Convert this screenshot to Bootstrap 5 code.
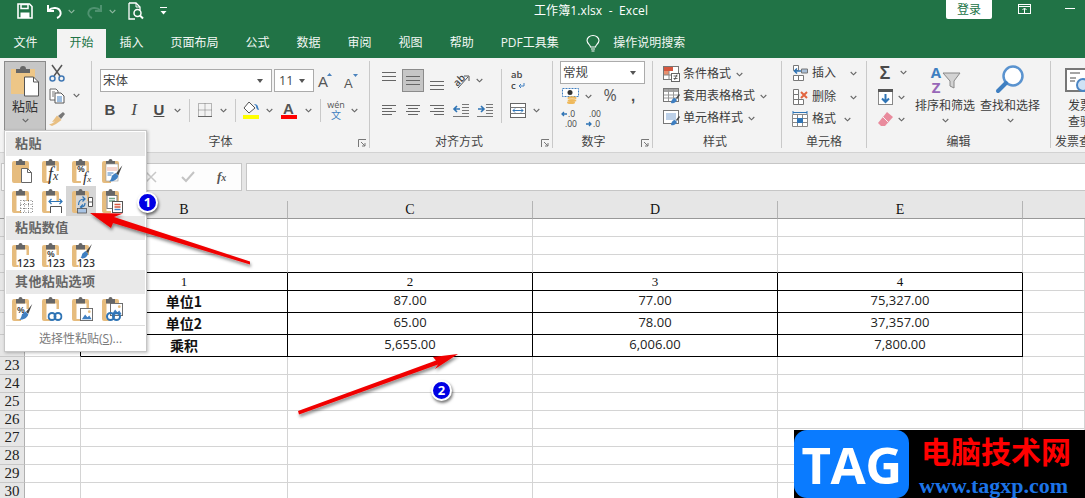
<!DOCTYPE html>
<html lang="zh-CN">
<head>
<meta charset="utf-8">
<title>工作簿1.xlsx - Excel</title>
<link href="https://cdn.jsdelivr.net/npm/bootstrap@5.3.0/dist/css/bootstrap.min.css" rel="stylesheet">
<style>
html,body{width:1085px;height:498px;overflow:hidden;margin:0}
body{position:relative;font-family:"Open Sans","Noto Sans CJK SC",sans-serif;font-size:12px;line-height:1.2;color:#3c3c3c;background:#fff}
svg{overflow:visible;flex:none}
.titlebar{height:29px;background:#217346;color:#fff}
.qt{height:22px;justify-content:center}
.ttl{width:200px;font-size:12px;letter-spacing:.1px;padding-top:4px;height:22px;white-space:pre}
.login{width:46px;height:19px;padding:0;background:#fff;color:#217346;border:0;border-radius:0 0 2px 2px;font-size:12px;line-height:19px}
.tabbar{height:29px;background:#217346;color:#f2f7f4}
.tabx{padding:0 13.5px;height:29px;line-height:27px;color:#f2f7f4;text-decoration:none;white-space:nowrap}
.tabx.on{background:#f3f3f3;color:#217346;padding:0 12.5px;margin-left:6px}
.ribbon{height:95px;background:#f3f3f3;border-bottom:1px solid #d2d2d2;padding-top:3px;overflow:hidden}
.grp{position:relative;flex:none;height:87px;border-right:1px solid #c9c9c9;display:flex;flex-direction:column}
.gbody{height:74px;flex:none}
.glabel{height:13px;line-height:13px;text-align:center;font-size:12px;color:#444;white-space:nowrap}
.lb2{padding-right:20px}.lb3{padding-right:4px}.lb4{padding-right:18px}.lb5{padding-right:4px}
.launch{position:absolute;right:3px;bottom:1px}
.g1{width:92px}.g2{width:278px}.g3{width:183px}.g4{width:100px}.g5{width:129px}.g6{width:85px}.g7{width:184px}.g8{width:60px;border-right:0}
.pastebtn{width:42px;height:70px;margin-left:4px;background:#c6c6c6;border:1px solid #8b8b8b;padding:0;color:#333}
.smallcol{width:40px}
.sr{height:23px}
.combo{height:23px;background:#fff;border:1px solid #ababab;font-size:12.5px;padding:0 8px 0 2px;color:#444}
.cb1{width:172px}.cb2{width:40px;margin-left:2px}.cb3{width:85px}
.tri{width:0;height:0;border-left:3.5px solid transparent;border-right:3.5px solid transparent;border-top:4px solid #555}
.c{display:flex;align-items:center;justify-content:center;flex:none}
.w12{width:12px}.w14{width:14px}.w16{width:16px}.w18{width:18px}.w20{width:20px}.w22{width:22px}.w24{width:24px}.w25{width:25px}.w26{width:26px}.w28{width:28px}.w10{width:10px}
.vs{width:1px;background:#c9c9c9;flex:none}
.h23{height:23px}.h24{height:24px}
.pt8{padding-top:8px}.ps8{padding-left:8px}.ps10{padding-left:10px}.mt6{margin-top:6px}
.press{background:#c6c6c6;border:1px solid #8b8b8b}
.bl{font-weight:700;font-size:15px;color:#4a4a4a;font-family:"Liberation Sans",sans-serif}
.it{font-style:italic;font-weight:400;font-family:"Liberation Serif",serif;font-size:17px}
.ul{text-decoration:underline}
.sty{height:22px}
.bigcol{width:60px}
.bigic{height:34px}
.ftxt{white-space:nowrap}
.strip{height:10px;background:#e6e6e6}
.fbar{height:28px;background:#e6e6e6}
.fleft{width:241px;margin-left:1px;background:#fdfdfd;border:1px solid #c6c6c6;height:28px;justify-content:flex-end}
.fright{flex:1;margin-left:4px;background:#fff;border:1px solid #c6c6c6;border-right:0;height:28px}
.sheet{table-layout:fixed;width:1085px;border-collapse:separate;border-spacing:0}
.sheet th{background:#e6e6e6;font:400 14px "Liberation Serif",serif;color:#111;text-align:center;padding:0;height:18px}
.sheet thead th{border-bottom:1px solid #989898;border-right:1px solid #b4b4b4;vertical-align:middle}
.sheet tbody th{font-size:15px;border-right:1px solid #b0b0b0;border-bottom:1px solid #c8c8c8;color:#222}
.sheet td{border-right:1px solid #d4d4d4;border-bottom:1px solid #d4d4d4;padding:0;height:18px;text-align:center;color:#222;font-size:13px;white-space:nowrap;vertical-align:middle;line-height:1}
.sheet tr.tall td,.sheet tr.tall th{height:22px}
.sheet tr.tall td{padding-bottom:2px}
.sheet td.kb{border-bottom-color:#000}
.sheet td.kr{border-right-color:#000}
.sheet td.k{border-right-color:#000;border-bottom-color:#000}
.sheet td.ser{font:400 13px "Liberation Serif",serif;color:#111}
.sheet td.bd{font:700 14px/16px "Noto Sans CJK SC",sans-serif;color:#111}
.pmenu{display:block;left:4px;top:130px;width:143px;height:222px;min-width:0;padding:1px 1px 0;margin:0;background:#fff;border:1px solid #c6c6c6;border-radius:0;box-shadow:1px 1px 3px rgba(0,0,0,.25)}
.phead{height:24px;line-height:23px;background:#e9e9e9;color:#666;font-weight:700;font-size:13px;padding:0 0 0 9px;letter-spacing:.4px}
.picrow{height:30px}
.pcell{width:30px;height:30px;padding-left:6px;display:flex;align-items:center;flex:none}
.pcell.hov{background:#d6d6d6}
.psep{height:1px;background:#dcdcdc;margin:1px 0 0}
.pspecial{height:26px;line-height:26px;text-align:center;color:#7a7a7a;font-size:12px;padding:0 0 0 10px;background:none}
.overlay{position:absolute;left:0;top:0;pointer-events:none;z-index:1010}
.numdot{position:absolute;z-index:1011;width:21px;height:21px;border-radius:50%;background:#0000e4;border:2px solid #fff;color:#fff;font:700 13px/17px "Open Sans",sans-serif;text-align:center;box-shadow:1px 2px 3px rgba(0,0,0,.55)}
.n1{left:137px;top:192px}.n2{left:431px;top:380px}
.wmark{position:absolute;left:794px;top:430px;width:291px;height:68px;background:#000;overflow:hidden}
.wblue{width:115px;height:68px;background:#0a7bff;border-radius:13px;color:#fff;font:700 51px/68px "Open Sans",sans-serif;text-align:center;letter-spacing:-.5px;flex:none}
.wcn{color:#f00;font:700 30px/30px "Noto Sans CJK SC",sans-serif;margin:5px 0 0 12px;white-space:nowrap}
.wen{color:#1c74e8;font:700 22px/22px "Liberation Serif",serif;margin:10px 0 0 10px;white-space:nowrap}
</style>
</head>
<body>
<svg width="0" height="0" class="position-absolute">
<symbol id="chv" viewBox="0 0 7 5"><path d="M.7 1 3.500 3.800 6.300 1" fill="none" stroke="#666" stroke-width="1.100"/></symbol>
<symbol id="chw" viewBox="0 0 7 5"><path d="M.7 1 3.500 3.800 6.300 1" fill="none" stroke="#8fb8a1" stroke-width="1.100"/></symbol>
<symbol id="pb" viewBox="0 0 21 24"><path fill="#e6bc7e" d="M0 4a2 2 0 0 1 2-2h13a2 2 0 0 1 2 2v8h-2.500V6.500h-10V22H9v2H2a2 2 0 0 1-2-2z"/><path fill="#666" d="M4 2h2.500a2 2 0 0 1 4 0H13v4.500H4z"/></symbol>
<symbol id="lnk" viewBox="0 0 15 9"><rect x="1" y="1" width="7" height="7" rx="3.500" fill="none" stroke="#2f74b5" stroke-width="2"/><rect x="7" y="1" width="7" height="7" rx="3.500" fill="none" stroke="#2f74b5" stroke-width="2"/></symbol>
<symbol id="bru" viewBox="0 0 12 14"><path d="M11.500 0 6 7l2 1.500z" fill="#444"/><path d="M5.500 6.500 8 9c-.5 3-4 5-8 5 2-1.500 2-3.500 2.500-5z" fill="#3f7fc1"/></symbol>
<symbol id="pict" viewBox="0 0 14 14"><rect x=".5" y=".5" width="13" height="13" fill="#fff" stroke="#666"/><path d="M2 12 5.500 7 8 10l2-2 2.500 4z" fill="#3f7fc1"/><circle cx="10" cy="4" r="1.500" fill="#e6bc7e"/></symbol>
</svg>

<div class="titlebar d-flex align-items-start">
  <div class="d-flex qt align-items-center" style="margin-left:17px">
    <svg width="16" height="16" viewBox="0 0 16 16"><path d="M1 1h11.500L15 3.500V15H1z" fill="none" stroke="#fff" stroke-width="1.600"/><path d="M4 1.500h7v4H4z" fill="none" stroke="#fff" stroke-width="1.500"/><path d="M3.500 9.500h9V15h-9z" fill="#fff"/></svg>
  </div>
  <div class="d-flex qt align-items-center" style="margin-left:13px">
    <svg width="17" height="15" viewBox="0 0 17 15"><path d="M2 1v6h6" fill="none" stroke="#fff" stroke-width="2"/><path d="M2.500 6.500C6 3 13 3 14.500 8c.7 2.500-1 5-3.500 6" fill="none" stroke="#fff" stroke-width="2"/></svg>
  </div>
  <div class="d-flex qt align-items-center" style="margin-left:5px"><svg width="7" height="5"><use href="#chw"/></svg></div>
  <div class="d-flex qt align-items-center" style="margin-left:11px">
    <svg width="17" height="15" viewBox="0 0 17 15"><g fill="none" stroke="#4f9270" stroke-width="2"><path d="M15 1v6H9"/><path d="M14.500 6.500C11 3 4 3 2.500 8c-.7 2.500 1 5 3.500 6"/></g></svg>
  </div>
  <div class="d-flex qt align-items-center" style="margin-left:6px"><svg width="7" height="5"><use href="#chw"/></svg></div>
  <div class="d-flex qt align-items-center" style="margin-left:12px">
    <svg width="16" height="18" viewBox="0 0 16 18"><path d="M1 1h7l4 4v3M1 1v16h6" fill="none" stroke="#fff" stroke-width="1.300"/><path d="M8 1v4h4" fill="none" stroke="#fff"/><circle cx="9.500" cy="11" r="3.500" fill="none" stroke="#fff" stroke-width="1.500"/><path d="m12 13.500 3 3" stroke="#fff" stroke-width="2"/></svg>
  </div>
  <div class="d-flex qt align-items-center" style="margin-left:16px">
    <svg width="7" height="8" viewBox="0 0 7 8"><path d="M0 .5h7" stroke="#fff"/><path d="M.5 4h6L3.500 7.500z" fill="#fff"/></svg>
  </div>
  <div class="ttl" style="margin-left:367px">工作簿1.xlsx  -  Excel</div>
  <button type="button" class="btn login ms-auto">登录</button>
  <div class="d-flex qt align-items-center" style="margin-left:26px;height:18px">
    <svg width="13" height="10" viewBox="0 0 13 10"><rect x=".5" y=".5" width="12" height="9" fill="none" stroke="#fff"/><path d="M0 2.500h13" stroke="#fff"/><path d="M6.500 9V4.500M4.500 6l2-2 2 2" fill="none" stroke="#fff"/></svg>
  </div>
  <div class="d-flex qt align-items-center" style="margin-left:34px;margin-right:10px;height:17px">
    <svg width="10" height="1"><path d="M0 .5h10" stroke="#fff"/></svg>
  </div>
</div>

<nav class="tabbar d-flex align-items-start">
  <a class="tabx" href="#">文件</a>
  <a class="tabx on" href="#">开始</a>
  <a class="tabx" href="#">插入</a>
  <a class="tabx" href="#">页面布局</a>
  <a class="tabx" href="#">公式</a>
  <a class="tabx" href="#">数据</a>
  <a class="tabx" href="#">审阅</a>
  <a class="tabx" href="#">视图</a>
  <a class="tabx" href="#">帮助</a>
  <a class="tabx" href="#">PDF工具集</a>
  <div class="d-flex align-items-center" style="height:29px;margin-left:14px">
    <svg width="14" height="18" viewBox="0 0 14 18"><path d="M4.500 12c0-2-3.500-3.500-3.500-6.500a6 5 0 0 1 12 0c0 3-3.500 4.500-3.500 6.500z" fill="none" stroke="#fff" stroke-width="1.100"/><path d="M5 14h4M5.500 16h3" stroke="#fff" stroke-width="1.200"/></svg>
  </div>
  <a class="tabx" href="#" style="padding-left:13px">操作说明搜索</a>
</nav>

<div class="ribbon d-flex">
  <!-- clipboard -->
  <div class="grp g1">
    <div class="gbody d-flex">
      <button type="button" class="btn pastebtn rounded-0 d-flex flex-column align-items-center">
        <svg width="30" height="32" viewBox="0 0 30 32" style="margin-top:3px"><rect x="1" y="4" width="24" height="25" fill="#edc687"/><path d="M6 4h4a3 3 0 0 1 6 0h4v4H6z" fill="#666"/><path d="M14.500 12h9l5 5v14h-14z" fill="#fff" stroke="#555"/><path d="M23.500 12v5h5" fill="none" stroke="#555"/></svg>
        <span style="font-size:13px;margin-top:1px;line-height:16px">粘贴</span>
        <svg width="7" height="5" class="mt-1"><use href="#chv"/></svg>
      </button>
      <div class="smallcol">
        <div class="sr d-flex align-items-center" style="padding-left:3px">
          <svg width="16" height="18" viewBox="0 0 16 18"><path d="M3 1l8 11M13 1 5 12" stroke="#555" stroke-width="1.500"/><circle cx="3.500" cy="14.500" r="2.500" fill="none" stroke="#4178b4" stroke-width="1.500"/><circle cx="12.500" cy="14.500" r="2.500" fill="none" stroke="#4178b4" stroke-width="1.500"/></svg>
        </div>
        <div class="sr d-flex align-items-center" style="padding-left:3px">
          <svg width="16" height="16" viewBox="0 0 16 16"><path d="M1 1h6l2 2v9H1z" fill="#fff" stroke="#666"/><path d="M6 5h6l3 3v7H6z" fill="#fff" stroke="#555"/><path d="M8 9h5M8 11h5M8 13h5" stroke="#3f7fc1"/><path d="M3 4h3M3 6h2M3 8h2" stroke="#777"/></svg>
          <svg width="7" height="5" style="margin-left:8px"><use href="#chv"/></svg>
        </div>
        <div class="sr d-flex align-items-center" style="padding-left:3px">
          <svg width="16" height="14" viewBox="0 0 16 14"><path d="M9 4 14 0l2 2-4 5z" fill="#777"/><path d="M8 3.500 12.500 8 7 12 3 14l-3-1.500 3-1 3-2-3 .5z" fill="#e8bf82"/></svg>
        </div>
      </div>
    </div>
  </div>
  <!-- font -->
  <div class="grp g2">
    <div class="gbody ps8 pt8">
      <div class="d-flex align-items-center h23">
        <div class="combo cb1 d-flex align-items-center justify-content-between"><span>宋体</span><span class="tri"></span></div>
        <div class="combo cb2 d-flex align-items-center justify-content-between"><span style="padding-left:2px">11</span><span class="tri"></span></div>
        <div class="c w26"><svg width="18" height="15" viewBox="0 0 18 15"><text x="0" y="14" font-family="Liberation Sans" font-size="15" fill="#555">A</text><path d="M9 3 11.500 0 14 3z" fill="#4a82bd"/></svg></div>
        <div class="c w24"><svg width="16" height="14" viewBox="0 0 16 14"><text x="0" y="14" font-family="Liberation Sans" font-size="13" fill="#555">A</text><path d="M9 0 11.500 3 14 0z" fill="#4a82bd"/></svg></div>
      </div>
      <div class="d-flex align-items-center h24 mt6">
        <div class="c w20 bl">B</div>
        <div class="c w28 bl it">I</div>
        <div class="c w22 bl ul">U</div>
        <div class="c w14"><svg width="7" height="5"><use href="#chv"/></svg></div>
        <div class="c w10"><span class="vs h23"></span></div>
        <div class="c w22"><svg width="14" height="14" viewBox="0 0 14 14"><path d="M.5.500h13v13H.5zM7 .5v13M.5 7h13" fill="none" stroke="#777" stroke-dasharray="1 1"/><path d="M0 13.500h14" stroke="#666"/></svg></div>
        <div class="c w14"><svg width="7" height="5"><use href="#chv"/></svg></div>
        <div class="c w10"><span class="vs h23"></span></div>
        <div class="c w22"><svg width="17" height="18" viewBox="0 0 17 18"><path d="M6 1 1 7l5 5 6-5z" fill="#fff" stroke="#555"/><path d="M11 3c2 0 4 1 4 3l1 3c-2 0-3-2-3-4z" fill="#3f7fc1"/><rect y="14" width="16" height="4" fill="#ff0"/></svg></div>
        <div class="c w14"><svg width="7" height="5"><use href="#chv"/></svg></div>
        <div class="c w25"><svg width="16" height="18" viewBox="0 0 16 18"><text x="2" y="13" font-family="Liberation Sans" font-weight="700" font-size="15" fill="#555">A</text><rect y="14" width="16" height="4" fill="#f00"/></svg></div>
        <div class="c w14"><svg width="7" height="5"><use href="#chv"/></svg></div>
        <div class="c w10"><span class="vs h23"></span></div>
        <div class="c w22"><svg width="18" height="20" viewBox="0 0 18 20"><text x="9" y="8" text-anchor="middle" font-family="Open Sans" font-size="9" fill="#555">wén</text><text x="9" y="19" text-anchor="middle" font-family="Noto Sans CJK SC" font-size="10" fill="#3f7fc1">文</text></svg></div>
        <div class="c w14"><svg width="7" height="5"><use href="#chv"/></svg></div>
      </div>
    </div>
    <div class="glabel lb2">字体</div>
    <svg class="launch" width="8" height="8" viewBox="0 0 8 8"><path d="M.5 8V.5H8M3 3l4 4M4 7h3V4" fill="none" stroke="#777"/></svg>
  </div>
  <!-- align -->
  <div class="grp g3">
    <div class="gbody pt8 ps8 d-flex">
      <div style="width:118px">
        <div class="d-flex align-items-center h23" style="gap:2px">
          <div class="c w22 h23"><svg width="14" height="23"><path d="M0 3.500h14M0 7.500h14M0 11.500h14" stroke="#666"/></svg></div>
          <div class="c w22 h23 press"><svg width="14" height="21"><path d="M0 6.500h14M0 10.500h14M0 14.500h14" stroke="#666"/></svg></div>
          <div class="c w22 h23"><svg width="14" height="23"><path d="M0 12.500h14M0 16.500h14M0 20.500h14" stroke="#666"/></svg></div>
          <div class="c w22 h23"><svg width="17" height="17" viewBox="0 0 17 17"><text x="1" y="13" transform="rotate(-45 5 10)" font-family="Open Sans" font-size="10" font-weight="600" fill="#444">ab</text><path d="M5 16 15 5" stroke="#555"/><path d="M11 4h5v5" fill="none" stroke="#555"/></svg></div>
          <div class="c w12" style="margin-left:-1px"><svg width="7" height="5"><use href="#chv"/></svg></div>
        </div>
        <div class="d-flex align-items-center h24 mt6" style="gap:2px">
          <div class="c w22"><svg width="14" height="11"><path d="M0 .5h14M0 3.500h10M0 6.500h14M0 9.500h10" stroke="#666"/></svg></div>
          <div class="c w22"><svg width="14" height="11"><path d="M0 .5h14M2 3.500h10M0 6.500h14M2 9.500h10" stroke="#666"/></svg></div>
          <div class="c w22"><svg width="14" height="11"><path d="M0 .5h14M4 3.500h10M0 6.500h14M4 9.500h10" stroke="#666"/></svg></div>
          <div class="c w22"><svg width="16" height="13" viewBox="0 0 16 13"><path d="M9 .5h7M9 3.500h7M9 6.500h7M9 9.500h7M0 12.500h16" stroke="#777"/><path d="M7 5H2M4 2 1 5l3 3" fill="none" stroke="#2f74b5" stroke-width="1.600"/></svg></div>
          <div class="c w22"><svg width="16" height="13" viewBox="0 0 16 13"><path d="M9 .5h7M9 3.500h7M9 6.500h7M9 9.500h7M0 12.500h16" stroke="#777"/><path d="M1 5h5M4 2l3 3-3 3" fill="none" stroke="#2f74b5" stroke-width="1.600"/></svg></div>
        </div>
      </div>
      <div class="vs" style="height:54px;margin-left:5px"></div>
      <div class="ps-1" style="margin-left:1px">
        <div class="c w22 h23"><svg width="16" height="19" viewBox="0 0 16 19"><text x="1" y="7" font-family="Open Sans" font-size="9.500" font-weight="600" fill="#444">ab</text><text x="1" y="18" font-family="Open Sans" font-size="9.500" font-weight="600" fill="#444">c</text><path d="M14 12v3H9M11 13l-2 2 2 2" fill="none" stroke="#3f7fc1"/></svg></div>
        <div class="d-flex align-items-center h24 mt6">
          <div class="c w22"><svg width="16" height="15" viewBox="0 0 16 15"><rect x=".5" y=".5" width="15" height="14" fill="#fff" stroke="#666"/><path d="M0 4.500h16M0 10.500h16" stroke="#777"/><path d="M3 7.500h10M5 5.500l-2 2 2 2M11 5.500l2 2-2 2" fill="none" stroke="#2f74b5"/></svg></div>
          <div class="c w14"><svg width="7" height="5"><use href="#chv"/></svg></div>
        </div>
      </div>
    </div>
    <div class="glabel lb3">对齐方式</div>
    <svg class="launch" width="8" height="8" viewBox="0 0 8 8"><path d="M.5 8V.5H8M3 3l4 4M4 7h3V4" fill="none" stroke="#777"/></svg>
  </div>
  <!-- number -->
  <div class="grp g4">
    <div class="gbody" style="padding-left:7px">
      <div class="combo cb3 d-flex align-items-center justify-content-between"><span>常规</span><span class="tri"></span></div>
      <div class="d-flex align-items-center" style="height:22px;margin-top:1px">
        <div class="c w20"><svg width="17" height="16" viewBox="0 0 17 16"><rect x=".5" y=".5" width="16" height="8" fill="#fff" stroke="#3f7fc1" stroke-dasharray="2 1"/><circle cx="8" cy="4.500" r="2.500" fill="#333"/><ellipse cx="10" cy="10" rx="4.500" ry="1.800" fill="#efb95c"/><ellipse cx="10" cy="12.500" rx="4.500" ry="1.800" fill="#efb95c" stroke="#f3f3f3" stroke-width=".5"/><ellipse cx="9" cy="14.500" rx="4" ry="1.500" fill="#efb95c"/></svg></div>
        <div class="c w16"><svg width="7" height="5"><use href="#chv"/></svg></div>
        <div class="c w22" style="font-size:16px;color:#555;margin-left:3px">%</div>
        <div class="c w22 bl" style="font-size:15px;margin-left:1px">,</div>
      </div>
      <div class="d-flex align-items-center" style="height:24px;gap:4px">
        <div class="c w20"><svg width="18" height="19" viewBox="0 0 18 19"><path d="M6 4H1M3 2 1 4l2 2" fill="none" stroke="#2f74b5" stroke-width="1.300"/><text x="7" y="7" font-family="Open Sans" font-size="8.500" fill="#444">.0</text><text x="4" y="17" font-family="Open Sans" font-size="8.500" fill="#444">.00</text></svg></div>
        <div class="c w20"><svg width="18" height="19" viewBox="0 0 18 19"><text x="4" y="7" font-family="Open Sans" font-size="8.500" fill="#444">.00</text><path d="M1 14h5M4 12l2 2-2 2" fill="none" stroke="#2f74b5" stroke-width="1.300"/><text x="8" y="17" font-family="Open Sans" font-size="8.500" fill="#444">.0</text></svg></div>
      </div>
    </div>
    <div class="glabel lb4">数字</div>
    <svg class="launch" width="8" height="8" viewBox="0 0 8 8"><path d="M.5 8V.5H8M3 3l4 4M4 7h3V4" fill="none" stroke="#777"/></svg>
  </div>
  <!-- styles -->
  <div class="grp g5">
    <div class="gbody ps10" style="padding-top:2px">
      <div class="sty d-flex align-items-center">
        <div class="c w20" style="justify-content:flex-start"><svg width="17" height="16" viewBox="0 0 17 16"><rect x=".5" y=".5" width="15" height="13" fill="#fff" stroke="#777"/><rect x="1" y="1" width="9" height="4" fill="#d6573f"/><rect x="1" y="5" width="5" height="4" fill="#e8906e"/><path d="M6 5v9M1 9h15" stroke="#888"/><rect x="8.500" y="7.500" width="8" height="8" fill="#fff" stroke="#666"/><path d="M10.500 10h4M10.500 12.500h4M11.500 14l2.500-5.500" stroke="#444" stroke-width=".8"/></svg></div>
        <span class="ftxt">条件格式</span><svg width="7" height="5" style="margin-left:5px"><use href="#chv"/></svg>
      </div>
      <div class="sty d-flex align-items-center">
        <div class="c w20" style="justify-content:flex-start"><svg width="17" height="16" viewBox="0 0 17 16"><rect x=".5" y=".5" width="15" height="13" fill="#fff" stroke="#777"/><rect x="1" y="1" width="14" height="3" fill="#a3a3a3"/><path d="M5.500 1v12M10.500 1v12M1 7h14M1 10h14" stroke="#999"/><path d="M8 15c0-3 2-5 4-5l2 2c-1 2-3 4-6 3z" fill="#3f7fc1"/><path d="m13 10 3-4 1 1-3 4z" fill="#444"/></svg></div>
        <span class="ftxt">套用表格格式</span><svg width="7" height="5" style="margin-left:5px"><use href="#chv"/></svg>
      </div>
      <div class="sty d-flex align-items-center">
        <div class="c w20" style="justify-content:flex-start"><svg width="17" height="16" viewBox="0 0 17 16"><rect x=".5" y=".5" width="15" height="13" fill="#fff" stroke="#777"/><rect x="3" y="3" width="10" height="7" fill="#bcd0e8"/><path d="M8 15c0-3 2-5 4-5l2 2c-1 2-3 4-6 3z" fill="#3f7fc1"/><path d="m13 10 3-4 1 1-3 4z" fill="#444"/></svg></div>
        <span class="ftxt">单元格样式</span><svg width="7" height="5" style="margin-left:5px"><use href="#chv"/></svg>
      </div>
    </div>
    <div class="glabel lb5">样式</div>
  </div>
  <!-- cells -->
  <div class="grp g6">
    <div class="gbody ps10" style="padding-top:1px">
      <div class="sty d-flex align-items-center">
        <div class="c w20" style="justify-content:flex-start"><svg width="16" height="16" viewBox="0 0 16 16"><path d="M1.500.5h5v5h-5zM1.500 10.500h5v5h-5zM6.500 10.500h5v5h-5z" fill="#fff" stroke="#777"/><path d="M9.500 4h6v4h-6z" fill="#a9bfd8" stroke="#777"/><path d="M9 6H3M5 3.500 2.500 6 5 8.500" fill="none" stroke="#2f74b5" stroke-width="1.500"/></svg></div>
        <span class="ftxt" style="width:38px">插入</span><svg width="7" height="5"><use href="#chv"/></svg>
      </div>
      <div class="sty d-flex align-items-center" style="margin-top:2px">
        <div class="c w20" style="justify-content:flex-start"><svg width="16" height="16" viewBox="0 0 16 16"><path d="M1.500.5h5v5h-5zM1.500 5.500h5v5h-5zM1.500 10.500h5v5h-5zM6.500 10.500h5v5h-5z" fill="#fff" stroke="#777"/><path d="m9 3 6 6M15 3 9 9" stroke="#e2653f" stroke-width="2"/></svg></div>
        <span class="ftxt" style="width:38px">删除</span><svg width="7" height="5"><use href="#chv"/></svg>
      </div>
      <div class="sty d-flex align-items-center">
        <div class="c w20" style="justify-content:flex-start"><svg width="16" height="16" viewBox="0 0 16 16"><path d="M1 1.500h14" stroke="#2f74b5"/><path d="M1 0v3M15 0v3" stroke="#2f74b5"/><path d="M.5 3.500h15v12H.5zM.5 7.500h15M.5 11.500h15M5.500 3.500v12M10.500 3.500v12" fill="#fff" stroke="#888"/><rect x="5" y="7" width="6" height="5" fill="#2f74b5"/></svg></div>
        <span class="ftxt" style="width:32px">格式</span><svg width="7" height="5"><use href="#chv"/></svg>
      </div>
    </div>
    <div class="glabel">单元格</div>
  </div>
  <!-- editing -->
  <div class="grp g7">
    <div class="gbody d-flex">
      <div style="width:48px;padding-left:10px">
        <div class="d-flex align-items-center" style="height:22px">
          <div class="c w16"><svg width="16" height="16" viewBox="0 0 16 16"><text x="8" y="14.500" text-anchor="middle" font-family="Liberation Sans" font-weight="700" font-size="18" fill="#4a4a4a">Σ</text></svg></div>
          <svg width="7" height="5" style="margin-left:7px"><use href="#chv"/></svg>
        </div>
        <div class="d-flex align-items-center" style="height:24px;margin-top:2px">
          <div class="c w16"><svg width="15" height="16" viewBox="0 0 15 16"><rect x=".5" y=".5" width="14" height="15" fill="#fff" stroke="#888"/><rect width="15" height="3" fill="#555"/><path d="M7.500 5v8M4 9.500l3.500 3.500L11 9.500" fill="none" stroke="#2f74b5" stroke-width="2"/></svg></div>
          <svg width="7" height="5" style="margin-left:5px"><use href="#chv"/></svg>
        </div>
        <div class="d-flex align-items-center" style="height:20px">
          <div class="c w16"><svg width="15" height="14" viewBox="0 0 15 14"><path d="M9 0l6 5-8 9H3l-3-3z" fill="#e98b9d"/><path d="m5 5 5 5" stroke="#f3f3f3"/></svg></div>
          <svg width="7" height="5" style="margin-left:5px"><use href="#chv"/></svg>
        </div>
      </div>
      <div class="bigcol d-flex flex-column align-items-center" style="padding-top:4px">
        <div class="bigic"><svg width="31" height="29" viewBox="0 0 31 29"><text x="6" y="13" text-anchor="middle" font-family="Open Sans" font-weight="700" font-size="15" fill="#3f7fc1">A</text><text x="6" y="28" text-anchor="middle" font-family="Open Sans" font-weight="700" font-size="15" fill="#9867b8">Z</text><path d="M13 8h17l-6 8v7l-4-2v-5z" fill="#d3d3d3" stroke="#888"/></svg></div>
        <span class="ftxt">排序和筛选</span>
        <svg width="7" height="5" style="margin-top:5px"><use href="#chv"/></svg>
      </div>
      <div class="bigcol d-flex flex-column align-items-center" style="margin-left:5px;padding-top:4px">
        <div class="bigic"><svg width="28" height="29" viewBox="0 0 28 29"><circle cx="17" cy="11" r="9.500" fill="#fff" stroke="#5a93cf" stroke-width="2.500"/><path d="m10 18-8 8" stroke="#3f7fc1" stroke-width="4" stroke-linecap="round"/></svg></div>
        <span class="ftxt">查找和选择</span>
        <svg width="7" height="5" style="margin-top:5px"><use href="#chv"/></svg>
      </div>
    </div>
    <div class="glabel">编辑</div>
  </div>
  <!-- invoice -->
  <div class="grp g8">
    <div class="gbody" style="padding:7px 0 0 14px">
      <svg width="24" height="25" viewBox="0 0 24 25" class="d-block"><rect x="1" y="1" width="20" height="22" fill="#fff" stroke="#777" stroke-width="2"/><path d="M5 5h10M5 10h6M5 13h5" stroke="#888" stroke-width="1.500"/><circle cx="18" cy="17" r="6" fill="#cfe2f5" stroke="#4a86c5" stroke-width="2"/></svg>
      <div class="ftxt" style="padding-left:3px;margin-top:5px;line-height:16px">发票<br>查验</div>
    </div>
    <div class="glabel text-start" style="padding-left:4px">发票查验</div>
  </div>
</div>

<div class="strip"></div>
<div class="fbar d-flex">
  <div class="fleft d-flex align-items-center">
    <svg width="12" height="12" viewBox="0 0 12 12" style="margin-right:24px"><path d="m1 1 10 10M11 1 1 11" stroke="#c8c8c8" stroke-width="1.500"/></svg>
    <svg width="14" height="12" viewBox="0 0 14 12" style="margin-right:22px"><path d="m1 6 4 4 8-9" fill="none" stroke="#c4c4c4" stroke-width="2"/></svg>
    <svg width="14" height="14" viewBox="0 0 14 14" style="margin-right:10px"><text x="0" y="11" font-family="Liberation Serif" font-style="italic" font-weight="700" font-size="13" fill="#555">f<tspan font-size="10">x</tspan></text></svg>
  </div>
  <div class="fright"></div>
</div>
<div class="strip"></div>

<table class="sheet">
  <colgroup><col style="width:25px"><col style="width:56px"><col style="width:207px"><col style="width:245px"><col style="width:245px"><col style="width:245px"><col style="width:62px"></colgroup>
  <thead><tr><th></th><th>A</th><th>B</th><th>C</th><th>D</th><th>E</th><th class="border-end-0"></th></tr></thead>
  <tbody>
    <tr><th>16</th><td></td><td></td><td></td><td></td><td></td><td></td></tr>
    <tr><th>17</th><td></td><td></td><td></td><td></td><td></td><td></td></tr>
    <tr><th>18</th><td></td><td class="kb"></td><td class="kb"></td><td class="kb"></td><td class="kb"></td><td></td></tr>
    <tr><th>19</th><td class="kr"></td><td class="k ser">1</td><td class="k ser">2</td><td class="k ser">3</td><td class="k ser">4</td><td></td></tr>
    <tr class="tall"><th>20</th><td class="kr"></td><td class="k bd">单位1</td><td class="k">87.00</td><td class="k">77.00</td><td class="k">75,327.00</td><td></td></tr>
    <tr class="tall"><th>21</th><td class="kr"></td><td class="k bd">单位2</td><td class="k">65.00</td><td class="k">78.00</td><td class="k">37,357.00</td><td></td></tr>
    <tr class="tall"><th>22</th><td class="kr"></td><td class="k bd">乘积</td><td class="k">5,655.00</td><td class="k">6,006.00</td><td class="k">7,800.00</td><td></td></tr>
    <tr><th>23</th><td></td><td></td><td></td><td></td><td></td><td></td></tr>
    <tr><th>24</th><td></td><td></td><td></td><td></td><td></td><td></td></tr>
    <tr><th>25</th><td></td><td></td><td></td><td></td><td></td><td></td></tr>
    <tr><th>26</th><td></td><td></td><td></td><td></td><td></td><td></td></tr>
    <tr><th>27</th><td></td><td></td><td></td><td></td><td></td><td></td></tr>
    <tr><th>28</th><td></td><td></td><td></td><td></td><td></td><td></td></tr>
    <tr><th>29</th><td></td><td></td><td></td><td></td><td></td><td></td></tr>
    <tr><th>30</th><td></td><td></td><td></td><td></td><td></td><td></td></tr>
  </tbody>
</table>

<!-- paste menu -->
<div class="dropdown-menu show pmenu">
  <div class="phead">粘贴</div>
  <div class="picrow d-flex">
    <div class="pcell"><svg width="21" height="24" viewBox="0 0 21 24"><use href="#pb"/><rect x="4" y="6" width="11" height="17" fill="#e6bc7e"/><path d="M9.500 9.500h6l4 4v10h-10z" fill="#fff" stroke="#666"/><path d="M15.500 9.500v4h4" fill="none" stroke="#666"/></svg></div>
    <div class="pcell"><svg width="21" height="24" viewBox="0 0 21 24"><use href="#pb"/><text x="6" y="21" font-family="Liberation Serif" font-style="italic" font-size="18" fill="#333">f<tspan font-size="12">x</tspan></text></svg></div>
    <div class="pcell"><svg width="21" height="24" viewBox="0 0 21 24"><use href="#pb"/><text x="5" y="13" font-family="Open Sans" font-weight="600" font-size="9" fill="#333">%</text><text x="11" y="23" font-family="Liberation Serif" font-style="italic" font-size="15" fill="#333">f<tspan font-size="9">x</tspan></text></svg></div>
    <div class="pcell"><svg width="21" height="24" viewBox="0 0 21 24"><use href="#pb"/><rect x="4" y="5" width="12" height="17" fill="#fff" stroke="#999" stroke-width=".6"/><path d="M5.500 9h9M5.500 11h9" stroke="#d6573f" stroke-dasharray="1 1"/><path d="M5.500 14h6M5.500 16h4" stroke="#3f7fc1"/><svg x="7" y="6" width="14" height="17" viewBox="0 0 12 14"><use href="#bru"/></svg></svg></div>
  </div>
  <div class="picrow d-flex">
    <div class="pcell"><svg width="21" height="24" viewBox="0 0 21 24"><use href="#pb"/><path d="M8.500 11.500h12v12h-12zM8.500 15.500h12M8.500 19.500h12M12.500 11.500v12M16.500 11.500v12" fill="none" stroke="#666" stroke-width=".8" stroke-dasharray="1 1.500"/></svg></div>
    <div class="pcell"><svg width="21" height="24" viewBox="0 0 21 24"><use href="#pb"/><path d="M7 12.500h13M9.500 10 7 12.500 9.500 15M17.500 10l2.500 2.500-2.500 2.500" fill="none" stroke="#2f74b5" stroke-width="1.200"/><path d="M8.500 24v-6.500h11V24" fill="none" stroke="#555"/></svg></div>
    <div class="pcell hov"><svg width="21" height="24" viewBox="0 0 21 24"><use href="#pb"/><rect x="4" y="6.500" width="11" height="13" fill="#d6d6d6"/><path d="M6.500 16c0-4 2-6 6-6M10.500 7.500 13 10l-2.500 2.500M13 14c0 2-1 4-4 4M11 20.500 8.500 18 11 15.500" fill="none" stroke="#2f74b5" stroke-width="1.200"/><path d="M16.500 8.500h4v9h-4zM16.500 13h4" fill="#fff" stroke="#555"/><rect x="5.500" y="19.500" width="9" height="4.500" fill="#a9c4e4" stroke="#555" stroke-width=".8"/></svg></div>
    <div class="pcell"><svg width="21" height="24" viewBox="0 0 21 24"><use href="#pb"/><rect x="5" y="6.500" width="10" height="13" fill="#fff" stroke="#777"/><path d="M7 9.500h6M7 12h6" stroke="#70a58a" stroke-width="1.500"/><rect x="10.500" y="12.500" width="10" height="11" fill="#fff" stroke="#555"/><path d="M12.500 15.500h6M12.500 18h6" stroke="#d6573f" stroke-width="1.400"/><path d="M12.500 20.500h6" stroke="#3f7fc1" stroke-width="1.400"/></svg></div>
  </div>
  <div class="phead">粘贴数值</div>
  <div class="picrow d-flex">
    <div class="pcell"><svg width="22" height="25" viewBox="0 0 22 25"><use href="#pb" width="21" height="24"/><text x="5" y="24" font-family="Open Sans" font-weight="600" font-size="10.500" fill="#333" stroke="#fff" stroke-width="2" paint-order="stroke">123</text></svg></div>
    <div class="pcell"><svg width="22" height="25" viewBox="0 0 22 25"><use href="#pb" width="21" height="24"/><text x="5" y="14" font-family="Open Sans" font-weight="600" font-size="9" fill="#333">%</text><text x="5" y="24" font-family="Open Sans" font-weight="600" font-size="10.500" fill="#333" stroke="#fff" stroke-width="2" paint-order="stroke">123</text></svg></div>
    <div class="pcell"><svg width="22" height="25" viewBox="0 0 22 25"><use href="#pb" width="21" height="24"/><svg x="7" y="1" width="14" height="15" viewBox="0 0 12 14"><use href="#bru"/></svg><text x="5" y="24" font-family="Open Sans" font-weight="600" font-size="10.500" fill="#333" stroke="#fff" stroke-width="2" paint-order="stroke">123</text></svg></div>
  </div>
  <div class="phead">其他粘贴选项</div>
  <div class="picrow d-flex">
    <div class="pcell"><svg width="21" height="24" viewBox="0 0 21 24"><use href="#pb"/><text x="5" y="16" font-family="Open Sans" font-weight="600" font-size="9" fill="#333">%</text><svg x="7" y="7" width="14" height="16" viewBox="0 0 12 14"><use href="#bru"/></svg></svg></div>
    <div class="pcell"><svg width="21" height="24" viewBox="0 0 21 24"><use href="#pb"/><svg x="5" y="15" width="16" height="9" viewBox="0 0 15 9"><use href="#lnk"/></svg></svg></div>
    <div class="pcell"><svg width="21" height="24" viewBox="0 0 21 24"><use href="#pb"/><svg x="8" y="11" width="13" height="13" viewBox="0 0 14 14"><use href="#pict"/></svg></svg></div>
    <div class="pcell"><svg width="21" height="24" viewBox="0 0 21 24"><use href="#pb"/><svg x="8" y="6" width="13" height="13" viewBox="0 0 14 14"><use href="#pict"/></svg><svg x="4" y="15" width="15" height="9" viewBox="0 0 15 9"><use href="#lnk"/></svg></svg></div>
  </div>
  <div class="psep"></div>
  <div class="dropdown-item pspecial">选择性粘贴(<u>S</u>)...</div>
</div>

<!-- annotations -->
<svg class="overlay" width="1085" height="498" viewBox="0 0 1085 498">
  <defs><filter id="shd" x="-10%" y="-30%" width="120%" height="160%"><feDropShadow dx="1" dy="2.500" stdDeviation="1.800" flood-color="#000" flood-opacity=".45"/></filter></defs>
  <polygon filter="url(#shd)" fill="#f00000" points="90,213 123,213.500 114,217 250,261.500 250,264.500 113,223 111,228"/>
  <polygon filter="url(#shd)" fill="#f00000" points="458,354 433,357 436,360.500 298,411 299,414.500 438,364.500 435,369"/>
</svg>
<div class="numdot n1">1</div>
<div class="numdot n2">2</div>

<div class="wmark d-flex">
  <div class="wblue">TAG</div>
  <div>
    <div class="wcn">电脑技术网</div>
    <div class="wen">www.tagxp.com</div>
  </div>
</div>

<script src="https://cdn.jsdelivr.net/npm/bootstrap@5.3.0/dist/js/bootstrap.bundle.min.js"></script>
</body>
</html>
